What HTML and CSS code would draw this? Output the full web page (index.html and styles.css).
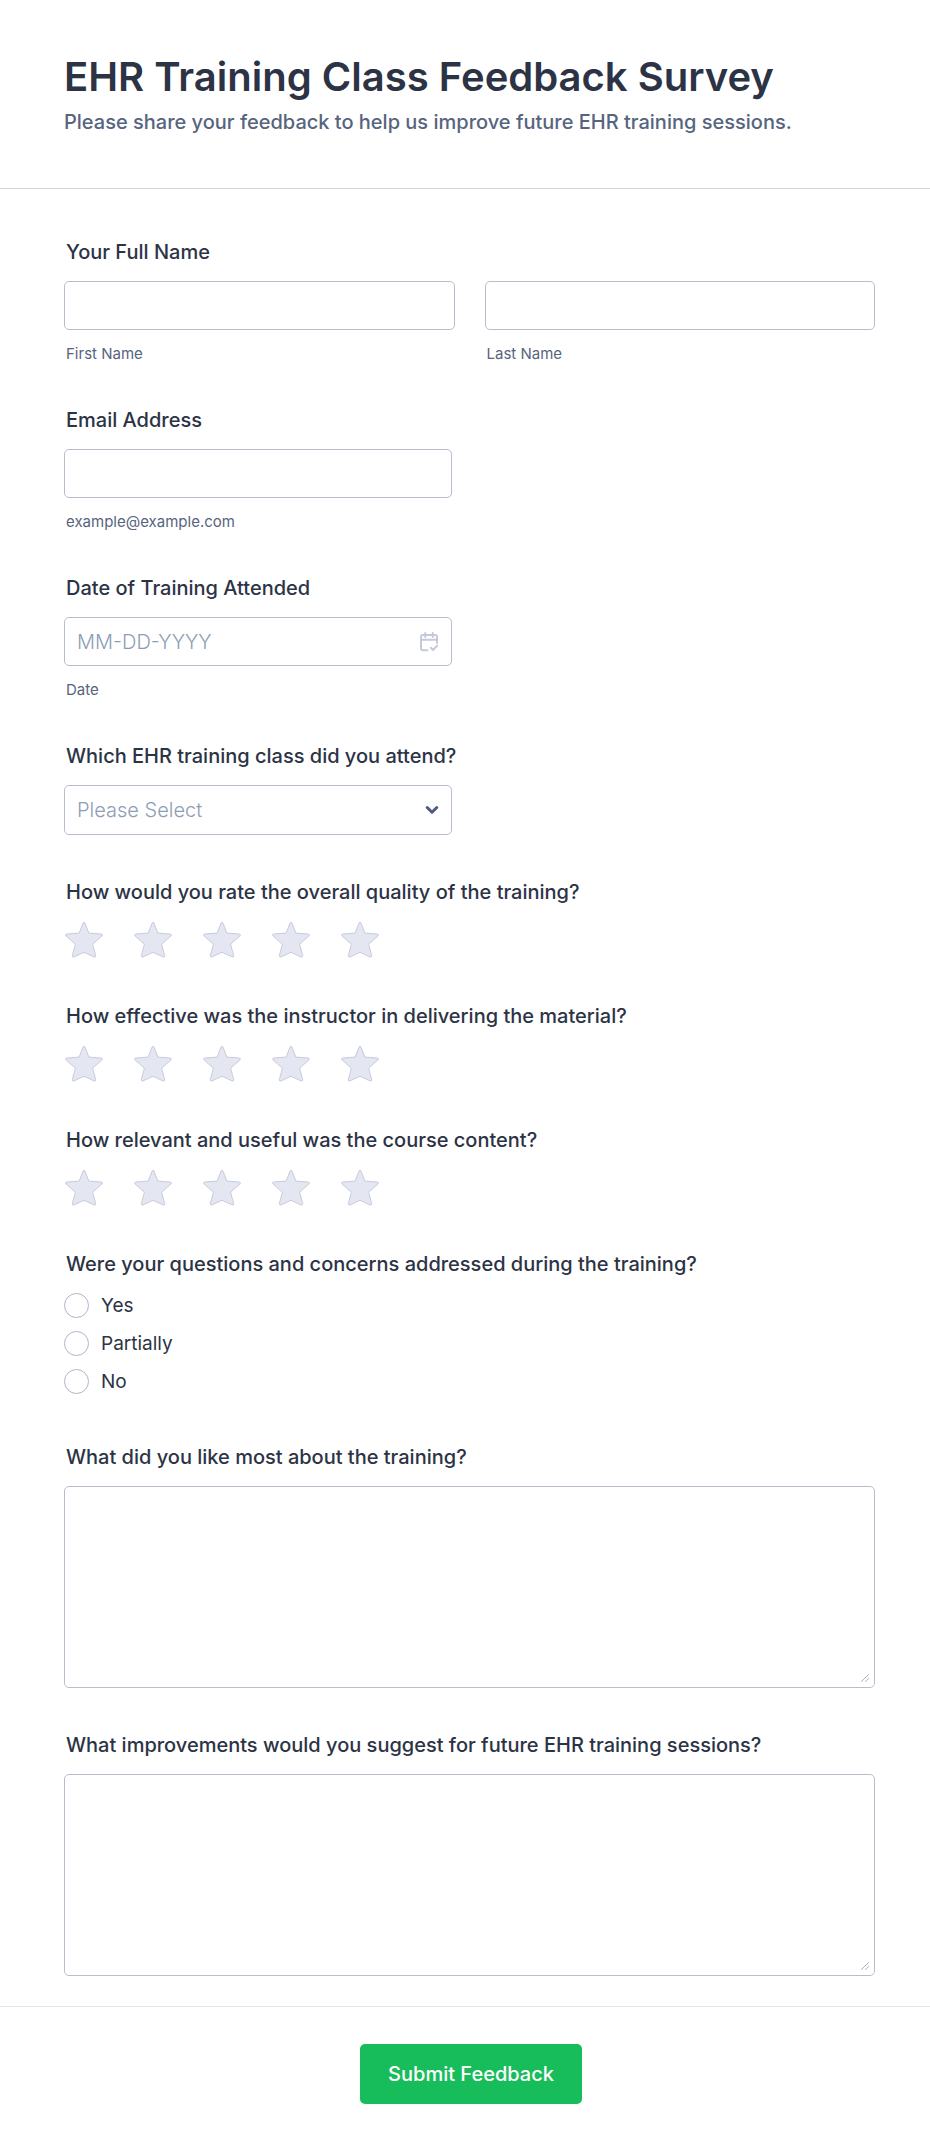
FILE: index.html
```html
<!DOCTYPE html>
<html lang="en">
<head>
<meta charset="utf-8">
<meta name="viewport" content="width=device-width, initial-scale=1">
<title>EHR Training Class Feedback Survey</title>
<link rel="stylesheet" href="styles.css">
</head>
<body>
<svg class="sprite" aria-hidden="true">
  <symbol id="star" viewBox="0 0 40 38">
    <path d="M19 2.1Q20 .3 21 2.1L24.8 12.1 37.2 13Q39.2 13.4 37.9 15L28.6 23.2 31.7 34.6Q31.7 36.6 30 35.9L20 31.3 10 35.9Q8.300 36.600 8.300 34.600L11.400 23.200 2.100 15Q.8 13.400 2.800 13L15.200 12.100Z"/>
  </symbol>
  <symbol id="grip" viewBox="0 0 10 10">
    <path d="M1.500 8.500L8.500 1.500M5.500 8.500L8.500 5.500"/>
  </symbol>
</svg>
<form class="form">
  <header class="header">
    <h1 class="title">EHR Training Class Feedback Survey</h1>
    <p class="subtitle">Please share your feedback to help us improve future EHR training sessions.</p>
  </header>

  <main class="fields">
    <fieldset class="field">
      <legend class="label">Your Full Name</legend>
      <div class="pair">
        <div class="column">
          <input class="control" id="first" type="text">
          <label class="hint" for="first">First Name</label>
        </div>
        <div class="column">
          <input class="control" id="last" type="text">
          <label class="hint" for="last">Last Name</label>
        </div>
      </div>
    </fieldset>

    <div class="field">
      <label class="label" for="email">Email Address</label>
      <div class="column half">
        <input class="control" id="email" type="email" aria-describedby="email-hint">
        <span class="hint" id="email-hint">example@example.com</span>
      </div>
    </div>

    <div class="field">
      <label class="label" for="date">Date of Training Attended</label>
      <div class="column half">
        <div class="stack">
          <input class="control" id="date" type="text" placeholder="MM-DD-YYYY" aria-describedby="date-hint">
          <svg class="calendar" viewBox="0 0 20 20" aria-hidden="true"><path d="M8.500 18.200H4Q2 18.200 2 16.200V5Q2 3 4 3H16Q18 3 18 5V11M2 7.800H18M6.300 1V5M13.700 1V5M11.800 15.800L14 18L18.200 13.800"/></svg>
        </div>
        <span class="hint" id="date-hint">Date</span>
      </div>
    </div>

    <div class="field">
      <label class="label" for="class">Which EHR training class did you attend?</label>
      <div class="stack half">
        <select class="control select" id="class"><option>Please Select</option></select>
        <svg class="chevron" viewBox="0 0 14 10" aria-hidden="true"><path d="M2.200 2.500L7 7.200L11.800 2.500"/></svg>
      </div>
    </div>

    <fieldset class="field">
      <legend class="label">How would you rate the overall quality of the training?</legend>
      <div class="stars">
        <label class="star"><input type="radio" name="quality" value="1" aria-label="1 star"><svg><use href="#star"/></svg></label>
        <label class="star"><input type="radio" name="quality" value="2" aria-label="2 stars"><svg><use href="#star"/></svg></label>
        <label class="star"><input type="radio" name="quality" value="3" aria-label="3 stars"><svg><use href="#star"/></svg></label>
        <label class="star"><input type="radio" name="quality" value="4" aria-label="4 stars"><svg><use href="#star"/></svg></label>
        <label class="star"><input type="radio" name="quality" value="5" aria-label="5 stars"><svg><use href="#star"/></svg></label>
      </div>
    </fieldset>

    <fieldset class="field">
      <legend class="label">How effective was the instructor in delivering the material?</legend>
      <div class="stars">
        <label class="star"><input type="radio" name="instructor" value="1" aria-label="1 star"><svg><use href="#star"/></svg></label>
        <label class="star"><input type="radio" name="instructor" value="2" aria-label="2 stars"><svg><use href="#star"/></svg></label>
        <label class="star"><input type="radio" name="instructor" value="3" aria-label="3 stars"><svg><use href="#star"/></svg></label>
        <label class="star"><input type="radio" name="instructor" value="4" aria-label="4 stars"><svg><use href="#star"/></svg></label>
        <label class="star"><input type="radio" name="instructor" value="5" aria-label="5 stars"><svg><use href="#star"/></svg></label>
      </div>
    </fieldset>

    <fieldset class="field">
      <legend class="label">How relevant and useful was the course content?</legend>
      <div class="stars">
        <label class="star"><input type="radio" name="content" value="1" aria-label="1 star"><svg><use href="#star"/></svg></label>
        <label class="star"><input type="radio" name="content" value="2" aria-label="2 stars"><svg><use href="#star"/></svg></label>
        <label class="star"><input type="radio" name="content" value="3" aria-label="3 stars"><svg><use href="#star"/></svg></label>
        <label class="star"><input type="radio" name="content" value="4" aria-label="4 stars"><svg><use href="#star"/></svg></label>
        <label class="star"><input type="radio" name="content" value="5" aria-label="5 stars"><svg><use href="#star"/></svg></label>
      </div>
    </fieldset>

    <fieldset class="field">
      <legend class="label">Were your questions and concerns addressed during the training?</legend>
      <div class="options">
        <label class="option"><input class="radio" type="radio" name="addressed" value="yes">Yes</label>
        <label class="option"><input class="radio" type="radio" name="addressed" value="partially">Partially</label>
        <label class="option"><input class="radio" type="radio" name="addressed" value="no">No</label>
      </div>
    </fieldset>

    <div class="field">
      <label class="label" for="liked">What did you like most about the training?</label>
      <div class="stack">
        <textarea class="control area" id="liked"></textarea>
        <svg class="grip" aria-hidden="true"><use href="#grip"/></svg>
      </div>
    </div>

    <div class="field">
      <label class="label" for="improve">What improvements would you suggest for future EHR training sessions?</label>
      <div class="stack">
        <textarea class="control area" id="improve"></textarea>
        <svg class="grip" aria-hidden="true"><use href="#grip"/></svg>
      </div>
    </div>
  </main>

  <footer class="footer">
    <button class="submit" type="submit">Submit Feedback</button>
  </footer>
</form>
</body>
</html>
```

FILE: styles.css
```css
* {
  box-sizing: border-box;
}

body {
  margin: 0;
  background: #fff;
  color: #2c3345;
  font-family: Inter, "Liberation Sans", sans-serif;
}

.sprite {
  position: absolute;
  width: 0;
  height: 0;
}

.header {
  padding: 53px 55px 54px 64px;
  border-bottom: 1px solid #d0d5e2;
}

.title {
  margin: 0;
  font-size: 40px;
  line-height: 48px;
  font-weight: 600;
}

.subtitle {
  margin: 9px 0 0;
  color: #57647e;
  font-size: 20px;
  line-height: 24px;
  font-weight: 500;
}

.fields {
  display: flex;
  flex-direction: column;
  gap: 45px;
  padding: 51px 55px 30px 64px;
}

.field {
  min-width: 0;
  margin: 0;
  padding: 0;
  border: 0;
}

.label {
  display: block;
  margin-bottom: 17px;
  padding: 0 2px;
  font-size: 20px;
  line-height: 24px;
  font-weight: 500;
}

.pair {
  display: grid;
  grid-template-columns: 1fr 1fr;
  gap: 30px;
}

.column {
  display: flex;
  flex-direction: column;
  gap: 15px;
}

.half {
  width: 100%;
  max-width: 388px;
}

.stack {
  display: grid;
  align-items: center;
}

.stack > * {
  grid-area: 1 / 1;
}

.control {
  display: block;
  width: 100%;
  height: 49px;
  margin: 0;
  padding: 0 12px;
  border: 1px solid #b8bdcd;
  border-radius: 5px;
  background: #fff;
  color: #2c3345;
  font: 300 20px/24px Inter, "Liberation Sans", sans-serif;
}

.control::placeholder {
  color: #8d9db5;
  opacity: 1;
}

.select {
  height: 50px;
  appearance: none;
  color: #8d9db5;
}

.area {
  height: 202px;
  padding: 12px;
  resize: vertical;
}

.area::-webkit-resizer {
  display: none;
}

.hint {
  padding: 0 2px;
  color: #57647e;
  font-size: 15px;
  line-height: 18px;
  font-weight: 400;
}

.calendar,
.chevron,
.grip {
  justify-self: end;
  fill: none;
  stroke-linecap: round;
  stroke-linejoin: round;
  pointer-events: none;
}

.calendar {
  width: 20px;
  height: 20px;
  margin-right: 13px;
  stroke: #c5cada;
  stroke-width: 2px;
}

.chevron {
  width: 14px;
  height: 10px;
  margin-right: 13px;
  stroke: #4f5b7c;
  stroke-width: 3px;
}

.grip {
  align-self: end;
  width: 10px;
  height: 10px;
  margin: 0 5px 5px 0;
  stroke: #a9afc4;
  stroke-width: 1px;
}

.stars {
  display: flex;
  gap: 29px;
}

.star {
  position: relative;
  width: 40px;
  height: 38px;
}

.star input {
  position: absolute;
  inset: 0;
  width: 100%;
  height: 100%;
  margin: 0;
  opacity: 0;
}

.star svg {
  display: block;
  width: 100%;
  height: 100%;
  fill: #e4e7f1;
  stroke: #c8ccdb;
  stroke-width: 1px;
  stroke-linejoin: round;
}

.options {
  display: flex;
  flex-direction: column;
  gap: 13px;
  padding-bottom: 6px;
}

.option {
  display: flex;
  align-items: center;
  gap: 12px;
  font-size: 19px;
  line-height: 25px;
  font-weight: 400;
}

.radio {
  appearance: none;
  flex: none;
  width: 25px;
  height: 25px;
  margin: 0;
  border: 1px solid #b0b5c8;
  border-radius: 50%;
  background: #fff;
}

.radio:checked {
  border: 8px solid #18bd5b;
}

.footer {
  display: flex;
  justify-content: center;
  padding: 37px 52px 49px 64px;
  border-top: 1px solid #e4e6ef;
}

.submit {
  min-height: 60px;
  padding: 0 28px;
  border: 0;
  border-radius: 5px;
  background: #18bd5b;
  color: #fff;
  font: 500 20px/24px Inter, "Liberation Sans", sans-serif;
}
```
